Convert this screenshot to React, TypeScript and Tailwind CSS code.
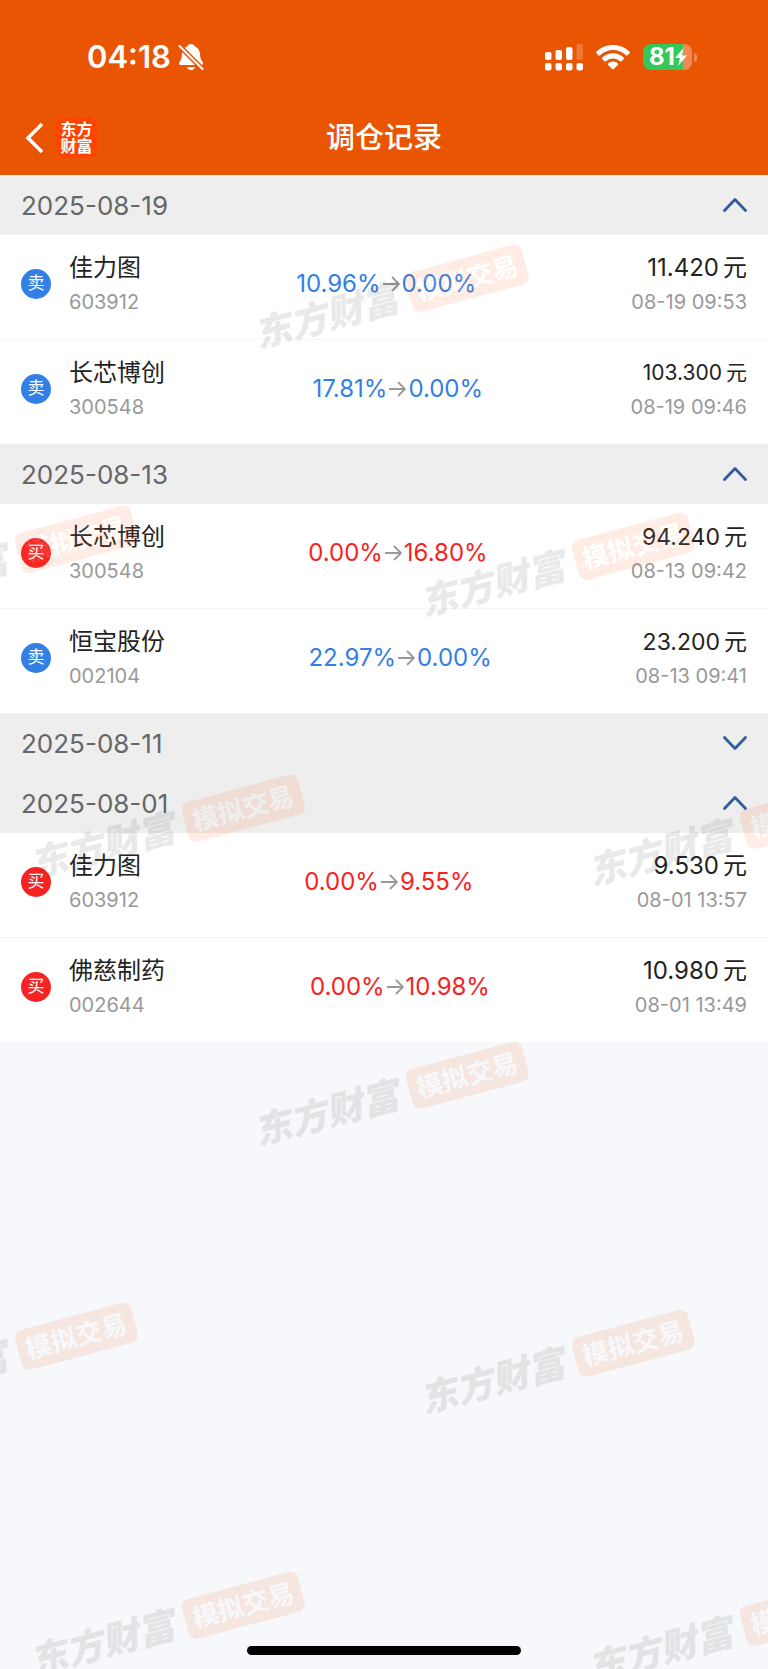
import { useState } from "react";

type Trade = {
  side: "buy" | "sell";
  name: string;
  code: string;
  from: string;
  to: string;
  price: string;
  size: "lg" | "md" | "sm";
  time: string;
};

type Day = { date: string; open: boolean; trades: Trade[] };

const days: Day[] = [
  {
    date: "2025-08-19",
    open: true,
    trades: [
      { side: "sell", name: "佳力图", code: "603912", from: "10.96%", to: "0.00%", price: "11.420", size: "lg", time: "08-19 09:53" },
      { side: "sell", name: "长芯博创", code: "300548", from: "17.81%", to: "0.00%", price: "103.300", size: "sm", time: "08-19 09:46" },
    ],
  },
  {
    date: "2025-08-13",
    open: true,
    trades: [
      { side: "buy", name: "长芯博创", code: "300548", from: "0.00%", to: "16.80%", price: "94.240", size: "md", time: "08-13 09:42" },
      { side: "sell", name: "恒宝股份", code: "002104", from: "22.97%", to: "0.00%", price: "23.200", size: "md", time: "08-13 09:41" },
    ],
  },
  { date: "2025-08-11", open: false, trades: [] },
  {
    date: "2025-08-01",
    open: true,
    trades: [
      { side: "buy", name: "佳力图", code: "603912", from: "0.00%", to: "9.55%", price: "9.530", size: "lg", time: "08-01 13:57" },
      { side: "buy", name: "佛慈制药", code: "002644", from: "0.00%", to: "10.98%", price: "10.980", size: "lg", time: "08-01 13:49" },
    ],
  },
];

const priceClass = {
  lg: "flex gap-1 text-2xl leading-8 text-[#222]",
  md: "flex gap-1 text-[23px] leading-8 text-[#222]",
  sm: "flex gap-1 text-[21px] leading-8 text-[#222]",
};

const marks = [
  { x: 390, y: 299 },
  { x: -1, y: 560 },
  { x: 556, y: 567 },
  { x: 166, y: 829 },
  { x: 724, y: 836 },
  { x: 390, y: 1096 },
  { x: -1, y: 1357 },
  { x: 556, y: 1364 },
  { x: 166, y: 1626 },
  { x: 724, y: 1633 },
];

function BellOff() {
  return (
    <svg className="h-7 w-[26px]" viewBox="0 0 26 28" aria-hidden="true">
      <path
        fill="#fff"
        d="M13 1c1.900 0 3.300 1 3.900 2.500 3.400 1.300 5 4.200 5.200 8 .1 4 1 5.600 2.500 7.500.9 1.200.4 3-1.200 3H2.600c-1.600 0-2.100-1.800-1.200-3 1.500-1.900 2.400-3.500 2.500-7.500.2-3.800 1.800-6.700 5.200-8C9.700 2 11.100 1 13 1zM9 24.200h8c-.5 1.700-2 2.800-4 2.800s-3.500-1.100-4-2.800z"
      />
      <path stroke="#ea5504" strokeWidth="5" d="M0 1.500 26 27.500" />
      <path stroke="#fff" strokeWidth="2" strokeLinecap="round" d="M1.500 3 24.500 26" />
    </svg>
  );
}

function Signal() {
  return (
    <svg className="h-7 w-[38px]" viewBox="0 0 38 28" fill="#fff" aria-hidden="true">
      <rect x="0" y="9" width="6.500" height="8" rx="2" />
      <rect x="10.500" y="7" width="6.500" height="10" rx="2" />
      <rect x="21" y="4" width="6.500" height="13" rx="2" />
      <rect x="31.500" y="1" width="6.500" height="16" rx="2" opacity=".2" />
      <rect x="0" y="20" width="6.500" height="7.500" rx="2" />
      <rect x="10.500" y="20" width="6.500" height="7.500" rx="2" />
      <rect x="21" y="20" width="6.500" height="7.500" rx="2" />
      <rect x="31.500" y="20" width="6.500" height="7.500" rx="2" />
    </svg>
  );
}

function Wifi() {
  return (
    <svg className="h-[25px] w-[34px]" viewBox="0 0 34 25" fill="#fff" aria-hidden="true">
      <path d="M17 0c6.400 0 12.200 2.500 16.500 6.600.5.500.5 1.100 0 1.600l-2 2c-.5.500-1.100.5-1.600 0C26.500 7 22 5 17 5S7.500 7 4.100 10.200c-.5.500-1.100.5-1.600 0l-2-2c-.5-.5-.5-1.100 0-1.600C4.800 2.500 10.600 0 17 0z" />
      <path d="M17 8.300c4.100 0 7.900 1.600 10.700 4.200.5.500.5 1.100 0 1.600l-2.100 2.100c-.5.500-1 .5-1.500 0-1.900-1.700-4.400-2.800-7.100-2.800s-5.200 1.100-7.100 2.800c-.5.500-1 .5-1.500 0l-2.100-2.100c-.5-.5-.5-1.100 0-1.600C9.100 9.900 12.900 8.300 17 8.300z" />
      <path d="M17 16.500c1.900 0 3.600.7 4.900 1.900.5.500.5 1 0 1.500l-4.100 4.200c-.5.500-1.100.5-1.600 0l-4.100-4.200c-.5-.5-.5-1 0-1.500 1.300-1.200 3-1.900 4.900-1.900z" />
    </svg>
  );
}

function Battery() {
  return (
    <div className="flex items-center gap-[2px]">
      <div className="flex h-[26px] w-[49px] items-center rounded-lg bg-linear-to-r from-[#34c759] from-82% to-[#f08a54] to-82% pl-[6px] text-2xl font-bold text-white">
        81
        <svg className="h-[18px] w-3" viewBox="0 0 12 18" fill="#fff" aria-hidden="true">
          <path d="M8.500 0 0 10h5L3 18l9-10.500H7z" />
        </svg>
      </div>
      <div className="h-[9px] w-[3px] rounded-r-full bg-[#f08a54]" />
    </div>
  );
}

function TradeRow({ trade, divided }: { trade: Trade; divided: boolean }) {
  const buy = trade.side === "buy";
  return (
    <li
      className={
        divided
          ? "flex h-[105px] items-center justify-between border-b border-[#f5f5f5] bg-white px-[21px] pb-[7px]"
          : "flex h-[104px] items-center justify-between bg-white px-[21px] pb-[7px]"
      }
    >
      <div className="flex items-center gap-[18px]">
        <span
          className={
            buy
              ? "flex size-[30px] items-center justify-center rounded-full bg-[#f62323] text-[17px] text-white"
              : "flex size-[30px] items-center justify-center rounded-full bg-[#327fe5] text-[17px] text-white"
          }
        >
          {buy ? "买" : "卖"}
        </span>
        <div className="flex flex-col gap-1">
          <span className="text-2xl leading-8 text-[#222]">{trade.name}</span>
          <span className="text-xl leading-7 text-[#999]">{trade.code}</span>
        </div>
      </div>
      <div className={buy ? "flex items-center text-2xl text-[#f62323]" : "flex items-center text-2xl text-[#327fe5]"}>
        {trade.from}
        <svg className="mx-[2px] h-4 w-[17px]" viewBox="0 0 17 16" fill="none" stroke="#999" strokeWidth="1.800" aria-hidden="true">
          <path d="M0 8h16M9 1l7 7-7 7" />
        </svg>
        {trade.to}
      </div>
      <div className="flex flex-col items-end gap-1">
        <span className={priceClass[trade.size]}>
          {trade.price}
          <span>元</span>
        </span>
        <span className="text-xl leading-7 text-[#999]">{trade.time}</span>
      </div>
    </li>
  );
}

function DaySection({ day }: { day: Day }) {
  const [open, setOpen] = useState(day.open);
  return (
    <section>
      <button
        type="button"
        aria-expanded={open}
        onClick={() => setOpen(!open)}
        className="flex h-[60px] w-full items-center justify-between bg-[#eee] px-[21px] text-[26px] text-[#666]"
      >
        {day.date}
        <svg className="h-[14px] w-6" viewBox="0 0 24 14" fill="none" stroke="#335c9e" strokeWidth="2.800" strokeLinecap="round" strokeLinejoin="round" aria-hidden="true">
          <path d={open ? "M1.500 12.500 12 1.500l10.500 11" : "M1.500 1.500 12 12.500l10.500-11"} />
        </svg>
      </button>
      {open && (
        <ul>
          {day.trades.map((t, i) => (
            <TradeRow key={t.code} trade={t} divided={i < day.trades.length - 1} />
          ))}
        </ul>
      )}
    </section>
  );
}

function Watermarks() {
  return (
    <div className="pointer-events-none absolute inset-0 overflow-hidden" aria-hidden="true">
      {marks.map((m) => (
        <div
          key={`${m.x}-${m.y}`}
          style={{ left: m.x, top: m.y }}
          className="absolute flex w-max -translate-1/2 -rotate-15 items-center gap-3 opacity-10"
        >
          <span className="text-[37px] leading-10 font-black text-[#333] italic">东方财富</span>
          <span className="flex h-[41px] w-[120px] items-center justify-center rounded-lg bg-[#ff5000] text-[26px] font-bold text-white">
            模拟交易
          </span>
        </div>
      ))}
    </div>
  );
}

export default function App() {
  return (
    <div className="relative flex min-h-screen flex-col overflow-hidden bg-[#f6f8fb] font-['Inter','Noto_Sans_CJK_SC',sans-serif]">
      <header className="bg-[#ea5504] text-white">
        <div className="flex h-[100px] items-center justify-between pt-[14px] pr-[71px] pl-[87px]">
          <div className="flex items-center gap-[7px]">
            <span className="text-[31px] font-semibold">04:18</span>
            <BellOff />
          </div>
          <div className="flex items-center gap-[13px]">
            <Signal />
            <Wifi />
            <Battery />
          </div>
        </div>
        <div className="grid h-[75px] grid-cols-[1fr_auto_1fr] items-center px-6">
          <div className="flex items-center gap-3">
            <button type="button" aria-label="返回">
              <svg className="h-8 w-5" viewBox="0 0 20 32" fill="none" stroke="#fff" strokeWidth="3.500" aria-hidden="true">
                <path d="M18 2 4 16l14 14" />
              </svg>
            </button>
            <div className="grid size-[41px] place-content-center rounded-lg bg-[#ff4400] text-base leading-[17px] font-bold">
              <span>东方</span>
              <span>财富</span>
            </div>
          </div>
          <h1 className="text-[29px] font-medium">调仓记录</h1>
        </div>
      </header>
      <main>
        {days.map((d) => (
          <DaySection key={d.date} day={d} />
        ))}
      </main>
      <Watermarks />
      <div className="mt-auto flex justify-center pb-[14px]">
        <div className="h-[9px] w-[274px] rounded-full bg-black" />
      </div>
    </div>
  );
}
